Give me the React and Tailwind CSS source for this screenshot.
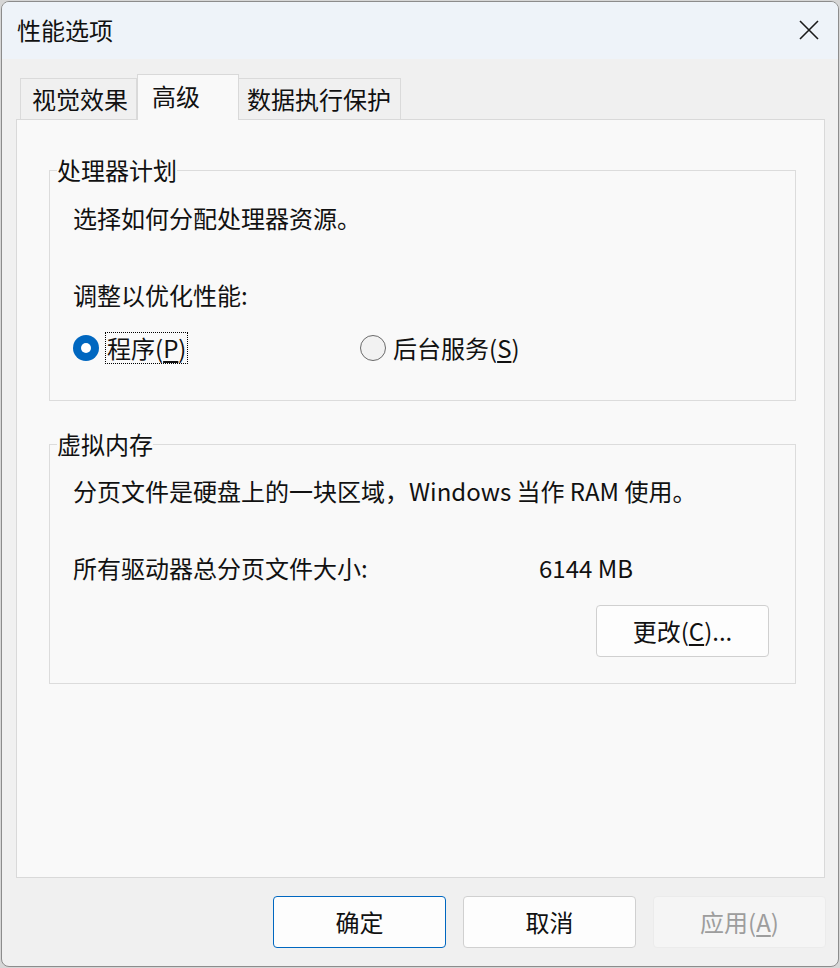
import React from "react";

const font = { fontFamily: '"Noto Sans CJK SC", "Noto Sans", sans-serif' };

function Radio({ checked }) {
  if (checked) {
    return (
      <span className="w-[26px] h-[26px] rounded-full bg-[#0067c0] flex items-center justify-center shrink-0">
        <span className="w-[10px] h-[10px] rounded-full bg-white" />
      </span>
    );
  }
  return (
    <span className="w-[26px] h-[26px] rounded-full border-[1.5px] border-[#6a6a6a] bg-[#f2f2f2] shrink-0" />
  );
}

export default function App() {
  return (
    <div
      className="w-[840px] h-[968px] bg-[#d6d6d6] pl-[1px] pt-[1px] text-[24px] text-[#111]"
      style={font}
    >
      <div className="w-[838px] h-[966px] rounded-[8px] border border-[#8c8c8c] overflow-hidden flex flex-col bg-[#f0f0f0]">
        {/* Title bar */}
        <div className="h-[57px] shrink-0 bg-[#eef3f9] flex items-start justify-between pl-[15px] pr-[19px]">
          <span className="leading-[32px] mt-[12px]">性能选项</span>
          <svg width="20" height="20" viewBox="0 0 20 20" className="mt-[18px]">
            <path d="M1 1 L19 19 M19 1 L1 19" stroke="#1a1a1a" strokeWidth="1.6" />
          </svg>
        </div>

        {/* Tabs */}
        <div className="pt-[15px] pl-[18px] flex items-end h-[60px] shrink-0 relative z-10">
          <div className="w-[117px] h-[41px] border border-b-0 border-[#dadada] bg-[#f0f0f0] pl-[11px] leading-[40px]">
            视觉效果
          </div>
          <div className="w-[102px] h-[46px] border border-b-0 border-[#d9d9d9] bg-[#f9f9f9] pl-[14px] leading-[42px] -mb-px">
            高级
          </div>
          <div className="w-[162px] h-[41px] border border-b-0 border-l-0 border-[#dadada] bg-[#f0f0f0] pl-[8px] leading-[40px]">
            数据执行保护
          </div>
        </div>

        {/* Panel */}
        <div className="ml-[14px] mr-[13px] h-[759px] shrink-0 border border-[#d9d9d9] bg-[#f9f9f9] pt-[34px] pl-[32px] pr-[28px]">
          <fieldset className="border border-[#dcdcdc] pb-[36px] pl-[23px] m-0">
            <legend className="-ml-[16px] px-0 leading-[32px]">处理器计划</legend>
            <div className="mt-[16px] leading-[32px]">选择如何分配处理器资源。</div>
            <div className="mt-[45px] leading-[32px]">调整以优化性能:</div>
            <div className="mt-[21px] flex items-center h-[32px]">
              <div className="w-[287px] flex items-center">
                <Radio checked />
                <span className="ml-[6px] h-[32px] border border-dotted border-black pl-[1px] pr-[1px] leading-[29px]">
                  程序(<u className="underline-offset-[3px]">P</u>)
                </span>
              </div>
              <div className="flex items-center">
                <Radio />
                <span className="ml-[7px] leading-[30px]">
                  后台服务(<u className="underline-offset-[3px]">S</u>)
                </span>
              </div>
            </div>
          </fieldset>

          <fieldset className="mt-[27px] border border-[#dcdcdc] pb-[26px] pl-[23px] pr-[26px] m-0">
            <legend className="-ml-[16px] px-0 leading-[32px]">虚拟内存</legend>
            <div className="mt-[15px] leading-[32px]">分页文件是硬盘上的一块区域，Windows 当作 RAM 使用。</div>
            <div className="mt-[45px] flex leading-[32px]">
              <span className="w-[466px]">所有驱动器总分页文件大小:</span>
              <span>6144 MB</span>
            </div>
            <div className="mt-[21px] flex justify-end">
              <button className="w-[173px] h-[52px] rounded-[4px] border border-[#d0d0d0] bg-[#fdfdfd] text-[24px] leading-[48px]">
                更改(<u className="underline-offset-[3px]">C</u>)...
              </button>
            </div>
          </fieldset>
        </div>

        {/* Bottom buttons */}
        <div className="mt-[18px] flex justify-end gap-[17px] pr-[12px]">
          <button className="w-[173px] h-[52px] rounded-[4px] border border-[#0067c0] bg-[#fdfdfd] text-[24px] leading-[48px]">
            确定
          </button>
          <button className="w-[173px] h-[52px] rounded-[4px] border border-[#d0d0d0] bg-[#fdfdfd] text-[24px] leading-[48px]">
            取消
          </button>
          <button className="w-[173px] h-[52px] rounded-[4px] border border-[#ebebeb] bg-[#f5f5f5] text-[24px] leading-[48px] text-[#9d9d9d]">
            应用(<u className="underline-offset-[3px]">A</u>)
          </button>
        </div>
      </div>
    </div>
  );
}
